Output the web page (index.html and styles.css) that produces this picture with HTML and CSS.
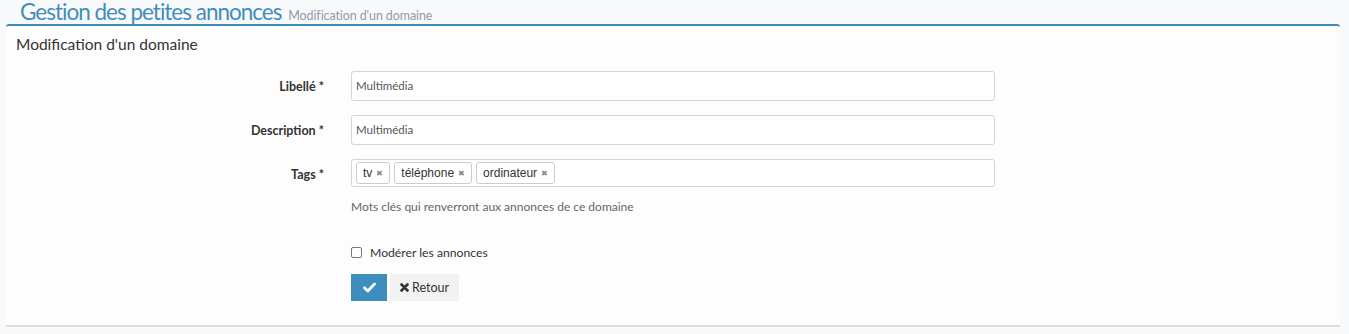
FILE: index.html
```html
<!DOCTYPE html>
<html lang="fr">
<head>
<meta charset="utf-8">
<title>Gestion des petites annonces</title>
<link rel="stylesheet" href="styles.css">
</head>
<body>
<div class="page-header">
  <h1>Gestion des petites annonces <small>Modification d'un domaine</small></h1>
</div>
<div class="card">
  <h2 class="card-title">Modification d'un domaine</h2>
  <form class="form">
    <div class="row">
      <label class="lbl">Libellé *</label>
      <div class="field"><div class="input">Multimédia</div></div>
    </div>
    <div class="row">
      <label class="lbl">Description *</label>
      <div class="field"><div class="input">Multimédia</div></div>
    </div>
    <div class="row">
      <label class="lbl">Tags *</label>
      <div class="field">
        <div class="input tags">
          <span class="tag">tv <span class="x">&#x2716;</span></span>
          <span class="tag">téléphone <span class="x">&#x2716;</span></span>
          <span class="tag">ordinateur <span class="x">&#x2716;</span></span>
        </div>
        <div class="help">Mots clés qui renverront aux annonces de ce domaine</div>
      </div>
    </div>
    <div class="row check-row">
      <div class="lbl"></div>
      <label class="check"><span class="box"></span>Modérer les annonces</label>
    </div>
    <div class="row btn-row">
      <div class="lbl"></div>
      <div class="btns">
        <button type="button" class="btn btn-primary"><svg width="13" height="11" viewBox="0 0 13 11"><path d="M1.5 5.8 L4.8 9 L11.5 2" fill="none" stroke="#fff" stroke-width="2.8" stroke-linecap="round" stroke-linejoin="round"/></svg></button>
        <button type="button" class="btn btn-light"><svg width="9" height="9" viewBox="0 0 9 9"><path d="M1.5 1.5 L7.5 7.5 M7.5 1.5 L1.5 7.5" stroke="#333" stroke-width="2.6" stroke-linecap="round"/></svg>Retour</button>
      </div>
    </div>
  </form>
</div>
</body>
</html>
```
FILE: styles.css
```css
* { box-sizing: border-box; }
body {
  margin: 0;
  background: #f8f9fb;
  font-family: "Source Sans Pro", "Lato", "Noto Sans", sans-serif;
  color: #393939;
  width: 1349px;
  height: 334px;
  overflow: hidden;
}
.page-header {
  padding: 0 0 0 20px;
  height: 24px;
}
.page-header h1 {
  margin: 0;
  font-weight: 400;
  font-size: 22.5px;
  letter-spacing: -1px;
  line-height: 24px;
  color: #438eb9;
  white-space: nowrap;
}
.page-header small {
  font-size: 12.5px;
  letter-spacing: -0.1px;
  color: #949aa8;
  margin-left: 2px;
}
.card {
  margin: 0 9px 0 6px;
  background: #fdfdfd;
  border-top: 2px solid #3b8bbd;
  border-bottom: 2px solid #dcdcdc;
  border-radius: 3px 3px 0 0;
  height: 303px;
}
.card-title {
  margin: 0;
  padding: 9px 0 0 10px;
  font-size: 15.5px;
  font-weight: 400;
  color: #333;
  line-height: 18px;
}
.form { padding-top: 18px; }
.row {
  display: flex;
  align-items: flex-start;
  margin-bottom: 14px;
}
.lbl {
  width: 320px;
  flex: none;
  text-align: right;
  font-weight: 700;
  font-size: 12.5px;
  color: #333;
  padding-top: 8px;
  padding-right: 2px;
}
.field { width: 644px; margin-left: 25px; }
.input {
  height: 30px;
  border: 1px solid #d5d5d5;
  border-radius: 3px;
  background: #fff;
  font-size: 11.5px;
  color: #555;
  padding: 7px 4px;
}
.tags {
  height: 28px;
  padding: 2px 4px;
  display: flex;
  gap: 4px;
  font-family: "Liberation Sans", Arial, sans-serif;
}
.tag {
  display: inline-flex;
  align-items: center;
  height: 22px;
  padding: 0 6px;
  border: 1px solid #ccc;
  border-radius: 3px;
  font-size: 12px;
  color: #333;
  background: #fff;
}
.x { font-size: 8px; color: #888; margin-left: 4px; }
.help {
  margin-top: 12px;
  font-size: 12px;
  color: #666;
}
.check-row { margin-top: 31px; margin-bottom: 14px; }
.check {
  display: flex;
  align-items: center;
  margin-left: 25px;
  font-size: 12.2px;
  color: #333;
}
.box {
  width: 11px;
  height: 11px;
  border: 1px solid #777;
  border-radius: 2px;
  background: #fff;
  margin-right: 8px;
}
.btns { display: flex; gap: 3px; margin-left: 25px; }
.btn {
  height: 27px;
  border: 0;
  font-family: inherit;
  font-size: 12.5px;
  display: inline-flex;
  align-items: center;
  justify-content: center;
  padding: 0;
}
.btn-primary { width: 36px; background: #3d8dbf; }
.btn-light { width: 69px; background: #f2f2f2; color: #333; gap: 3px; }
```
